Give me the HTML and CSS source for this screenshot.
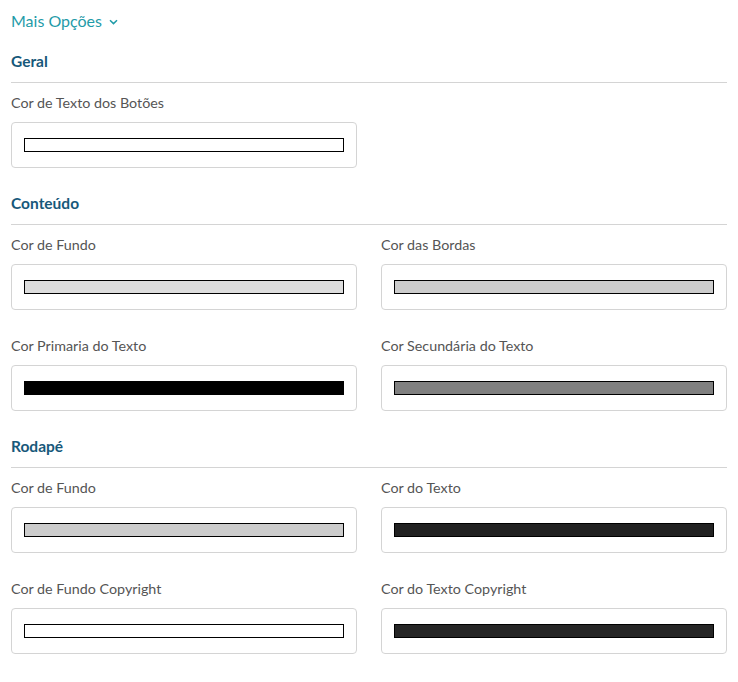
FILE: index.html
```html
<!DOCTYPE html>
<html lang="pt-BR">
<head>
<meta charset="utf-8">
<title>Mais Opções</title>
<link rel="stylesheet" href="styles.css">
</head>
<body>
<div class="page">
  <button class="toggle" type="button">Mais Opções
    <svg class="chev" width="9" height="6" viewBox="0 0 9 6"><path d="M1 1.2 L4.5 4.6 L8 1.2" fill="none" stroke="currentColor" stroke-width="1.5"/></svg>
  </button>

  <section class="group">
    <h2 class="group-title">Geral</h2>
    <div class="grid">
      <div class="field">
        <label class="label">Cor de Texto dos Botões</label>
        <div class="box"><span class="swatch" style="background:#ffffff"></span></div>
      </div>
    </div>
  </section>

  <section class="group">
    <h2 class="group-title">Conteúdo</h2>
    <div class="grid">
      <div class="field">
        <label class="label">Cor de Fundo</label>
        <div class="box"><span class="swatch" style="background:#dddddd"></span></div>
      </div>
      <div class="field">
        <label class="label">Cor das Bordas</label>
        <div class="box"><span class="swatch" style="background:#cccccc"></span></div>
      </div>
      <div class="field">
        <label class="label">Cor Primaria do Texto</label>
        <div class="box"><span class="swatch" style="background:#000000"></span></div>
      </div>
      <div class="field">
        <label class="label">Cor Secundária do Texto</label>
        <div class="box"><span class="swatch" style="background:#808080"></span></div>
      </div>
    </div>
  </section>

  <section class="group">
    <h2 class="group-title">Rodapé</h2>
    <div class="grid">
      <div class="field">
        <label class="label">Cor de Fundo</label>
        <div class="box"><span class="swatch" style="background:#cccccc"></span></div>
      </div>
      <div class="field">
        <label class="label">Cor do Texto</label>
        <div class="box"><span class="swatch" style="background:#222222"></span></div>
      </div>
      <div class="field">
        <label class="label">Cor de Fundo Copyright</label>
        <div class="box"><span class="swatch" style="background:#ffffff"></span></div>
      </div>
      <div class="field">
        <label class="label">Cor do Texto Copyright</label>
        <div class="box"><span class="swatch" style="background:#262626"></span></div>
      </div>
    </div>
  </section>
</div>
</body>
</html>
```
FILE: styles.css
```css
* { box-sizing: border-box; }
html, body { margin: 0; padding: 0; background: #fff; }
body {
  font-family: "Lato", "Noto Sans", "DejaVu Sans", sans-serif;
  color: #555;
}
.page {
  padding: 11px 11px 0 11px;
  width: 738px;
}
.toggle {
  display: flex;
  align-items: center;
  gap: 7px;
  border: 0;
  background: none;
  padding: 0;
  margin: 0;
  font: inherit;
  font-size: 16px;
  line-height: 20px;
  color: #1f9ba8;
  cursor: pointer;
}
.chev { margin-top: 1px; }
.group { margin-top: 20px; }
.group + .group { margin-top: 25px; }
.group-title {
  margin: 0;
  font-size: 15.5px;
  line-height: 20px;
  font-weight: 700;
  color: #17587a;
  padding-bottom: 11px;
  border-bottom: 1px solid #d4d4d4;
}
.grid {
  display: grid;
  grid-template-columns: 1fr 1fr;
  column-gap: 24px;
  row-gap: 27px;
  padding-top: 11px;
}
.field { display: flex; flex-direction: column; }
.label {
  font-size: 14.3px;
  line-height: 18px;
  color: #555;
  margin-bottom: 10px;
}
.box {
  height: 46px;
  border: 1px solid #d4d4d4;
  border-radius: 4px;
  display: flex;
  align-items: center;
  padding: 0 12px;
}
.swatch {
  display: block;
  width: 100%;
  height: 14px;
  border: 1px solid #000;
}
```
